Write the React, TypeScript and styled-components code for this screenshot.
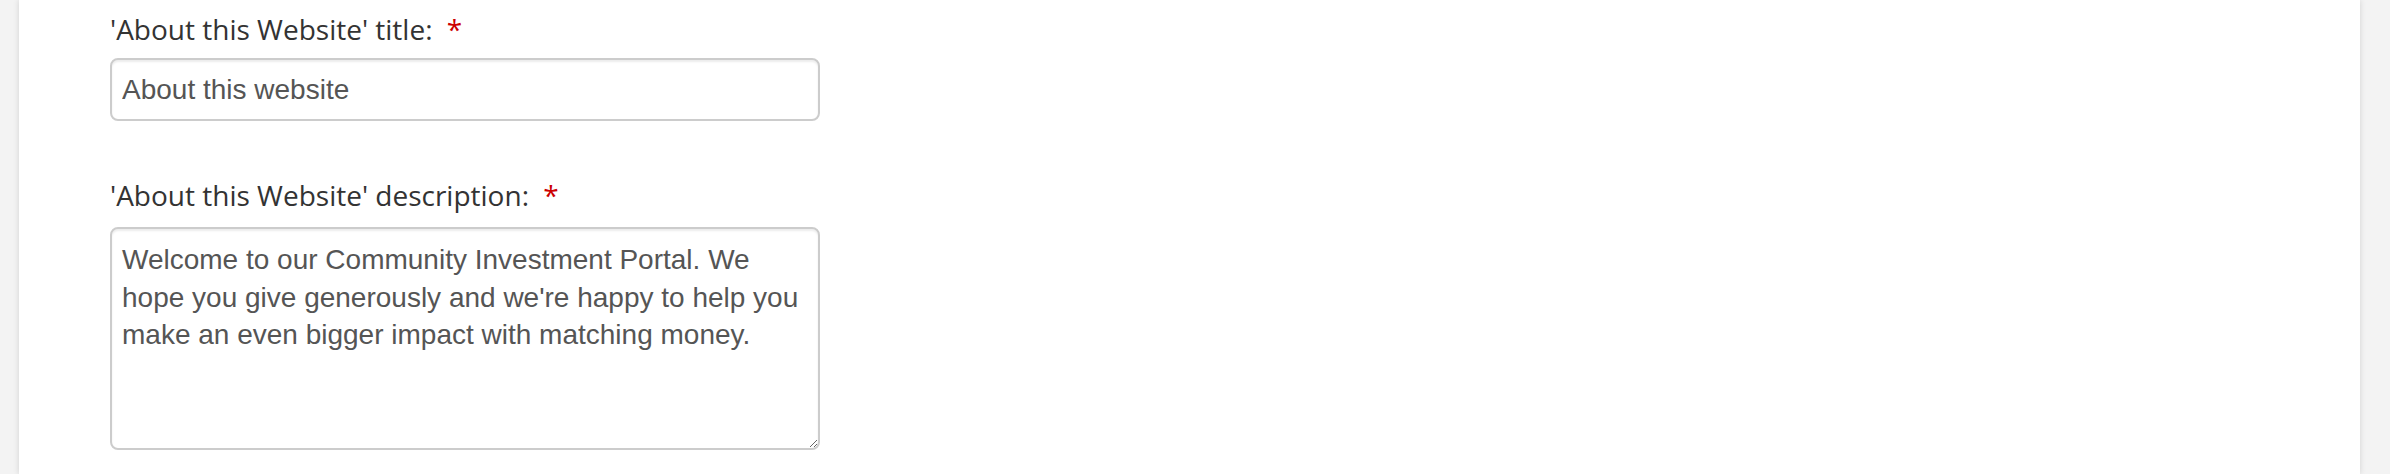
import React from "react";
import styled, { createGlobalStyle } from "styled-components";

const GlobalStyle = createGlobalStyle`
  html, body {
    margin: 0;
    padding: 0;
    background: #f3f3f3;
    height: 474px;
    overflow: hidden;
  }
`;

const Page = styled.div`
  display: flex;
  height: 474px;
`;

const Panel = styled.main`
  margin-left: 19px;
  width: 2341px;
  height: 474px;
  background: #ffffff;
  box-shadow: 0 0 6px rgba(0, 0, 0, 0.14);
  padding: 9px 0 0 91px;
  box-sizing: border-box;
`;

const FormGroup = styled.div<{ $gap: number }>`
  display: flex;
  flex-direction: column;
  align-items: flex-start;
  margin-bottom: ${(p) => p.$gap}px;
`;

const Label = styled.label<{ $spacing: number }>`
  font-family: "Open Sans", "Noto Sans", sans-serif;
  font-size: 28px;
  line-height: 40px;
  color: #333333;
  margin-bottom: ${(p) => p.$spacing}px;
`;

const Required = styled.span`
  color: #cc0000;
  margin-left: 7px;
`;

const TextInput = styled.input`
  box-sizing: border-box;
  width: 710px;
  height: 63px;
  padding: 0 11px 0 10px;
  font-family: "Liberation Sans", Arial, sans-serif;
  font-size: 28px;
  color: #555555;
  background: #ffffff;
  border: 2px solid #cccccc;
  border-radius: 8px;
  box-shadow: inset 0 2px 2px rgba(0, 0, 0, 0.075);
  outline: none;
`;

const TextArea = styled.textarea`
  box-sizing: border-box;
  width: 710px;
  height: 223px;
  padding: 12px 11px 8px 10px;
  font-family: "Liberation Sans", Arial, sans-serif;
  font-size: 28px;
  line-height: 37.5px;
  color: #555555;
  background: #ffffff;
  border: 2px solid #cccccc;
  border-radius: 8px;
  box-shadow: inset 0 2px 2px rgba(0, 0, 0, 0.075);
  outline: none;
  overflow: hidden;
  white-space: pre;
  resize: both;
`;

const description =
  "Welcome to our Community Investment Portal. We\nhope you give generously and we're happy to help you\nmake an even bigger impact with matching money.";

export default function App() {
  return (
    <>
      <GlobalStyle />
      <Page>
        <Panel>
          <FormGroup $gap={54}>
            <Label htmlFor="about-title" $spacing={9}>
              'About this Website' title: <Required>*</Required>
            </Label>
            <TextInput id="about-title" type="text" defaultValue="About this website" />
          </FormGroup>
          <FormGroup $gap={0}>
            <Label htmlFor="about-desc" $spacing={12}>
              'About this Website' description: <Required>*</Required>
            </Label>
            <TextArea id="about-desc" wrap="off" defaultValue={description} />
          </FormGroup>
        </Panel>
      </Page>
    </>
  );
}
